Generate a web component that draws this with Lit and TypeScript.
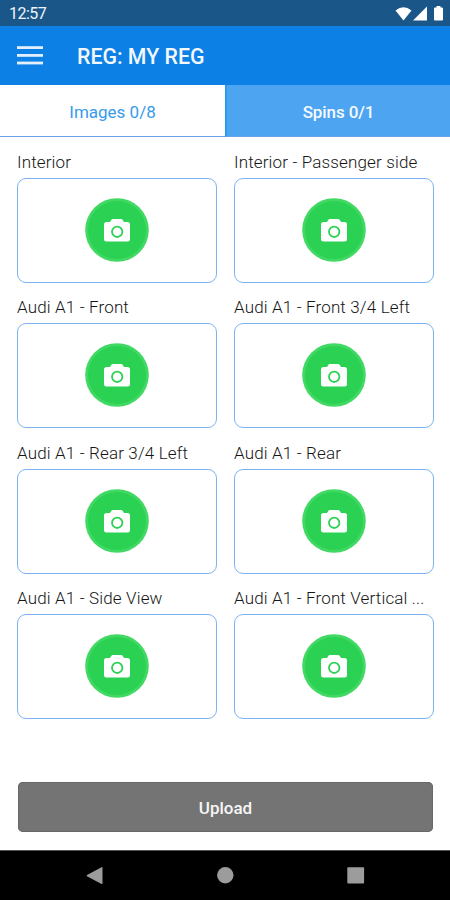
import { LitElement, html, css, svg } from "lit";
import { customElement, property } from "lit/decorators.js";

@customElement("photo-slot")
class PhotoSlot extends LitElement {
  @property() label = "";

  static styles = css`
    :host {
      display: block;
      min-width: 0;
    }
    .label {
      height: 32px;
      line-height: 33px;
      font-size: 17px;
      font-weight: 300;
      letter-spacing: 0.15px;
      color: #161616;
      white-space: nowrap;
    }
    .frame {
      box-sizing: border-box;
      height: 105px;
      border: 1.5px solid #7db3f3;
      border-radius: 9px;
      display: flex;
      align-items: center;
      justify-content: center;
    }
    .shot {
      width: 64px;
      height: 64px;
      margin-bottom: 1px;
      display: block;
    }
  `;

  render() {
    return html`
      <div class="label">${this.label}</div>
      <div class="frame">
        <svg class="shot" viewBox="0 0 64 64">
          <circle cx="32" cy="32" r="31.8" fill="#41d964" />
          <circle cx="32" cy="32" r="29" fill="#2bd152" />
          <path
            fill="#fff"
            d="M21.5 24H25l1.2-2q.6-1 1.8-1h8q1.200 0 1.800 1l1.200 2h3.500q2.500 0 2.500 2.500v14.500q0 2.500-2.500 2.500h-21q-2.500 0-2.500-2.500V26.500Q19 24 21.500 24z"
          />
          <circle cx="32.200" cy="33.800" r="5.200" fill="none" stroke="#2bd152" stroke-width="1.800" />
        </svg>
      </div>
    `;
  }
}

@customElement("app-root")
class AppRoot extends LitElement {
  static styles = css`
    :host {
      display: flex;
      flex-direction: column;
      box-sizing: border-box;
      width: 450px;
      height: 900px;
      overflow: hidden;
      background: #fff;
      font-family: Roboto, sans-serif;
    }
    .status {
      height: 26px;
      flex: none;
      box-sizing: border-box;
      display: flex;
      align-items: center;
      justify-content: space-between;
      padding: 2px 6px 0 9px;
      background: #1a5788;
      color: #edf4fa;
      font-size: 16px;
      letter-spacing: -0.5px;
      line-height: 24px;
    }
    .signals {
      width: 50px;
      height: 18px;
      display: block;
    }
    .bar {
      height: 59px;
      flex: none;
      display: flex;
      align-items: center;
      background: #0c80e4;
      color: #f3f8fe;
    }
    .menu {
      width: 26px;
      height: 21px;
      margin: 0 34px 0 17px;
    }
    .title {
      font-size: 21.3px;
      font-weight: 500;
      padding-top: 1px;
    }
    .tabs {
      height: 52px;
      flex: none;
      display: grid;
      grid-template-columns: 225px 225px;
    }
    .tab {
      box-sizing: border-box;
      border-bottom: 1px solid #6c9fe6;
      display: flex;
      align-items: center;
      justify-content: center;
      font-size: 17px;
      padding-top: 2px;
      color: #379bea;
    }
    .tab.filled {
      background: #4da4f0;
      border-left: 2px solid #2b9beb;
      color: #f4faff;
      font-weight: 500;
      letter-spacing: -0.1px;
    }
    .grid {
      flex: 1;
      display: grid;
      grid-template-columns: 200px 200px;
      grid-auto-rows: 137px;
      gap: 8.4px 17px;
      padding: 9px 16px 0 17px;
    }
    .upload {
      flex: none;
      height: 50px;
      margin: 0 17px 18px 18px;
      border: 0;
      border-radius: 5px;
      box-shadow: inset 0 0 0 1px #686868;
      background: #747474;
      color: #f6f6f6;
      font: 500 17px/51px Roboto, sans-serif;
      text-align: center;
      padding: 1px 0 0;
    }
    .nav {
      flex: none;
      height: 50px;
      background: #000;
    }
    .nav svg {
      display: block;
      width: 450px;
      height: 50px;
    }
  `;

  private slots = [
    "Interior",
    "Interior - Passenger side",
    "Audi A1 - Front",
    "Audi A1 - Front 3/4 Left",
    "Audi A1 - Rear 3/4 Left",
    "Audi A1 - Rear",
    "Audi A1 - Side View",
    "Audi A1 - Front Vertical ...",
  ];

  render() {
    return html`
      <div class="status">
        <span>12:57</span>
        <svg class="signals" viewBox="0 0 50 18" fill="#fff">
          <path d="M1.500 5.500Q9.500-1 17.500 5.500L9.500 15.500z" />
          <path d="M33 1.500V15.500H19z" />
          <path d="M41 2.500h1.500V1h4v1.500H48q1 0 1 1v11q0 1-1 1h-7q-1 0-1-1v-11q0-1 1-1z" />
        </svg>
      </div>
      <header class="bar">
        <svg class="menu" viewBox="0 0 26 21">
          ${[1.2, 9, 16.6].map((y) => svg`<rect x="0" y=${y} width="26" height="2.800" fill="#e4effd" />`)}
        </svg>
        <span class="title">REG: MY REG</span>
      </header>
      <nav class="tabs">
        <div class="tab">Images 0/8</div>
        <div class="tab filled">Spins 0/1</div>
      </nav>
      <main class="grid">${this.slots.map((s) => html`<photo-slot .label=${s}></photo-slot>`)}</main>
      <button class="upload">Upload</button>
      <div class="nav">
        <svg viewBox="0 0 450 50" fill="#9c9c9c">
          <rect width="450" height="1" fill="#555" />
          <path d="M101.500 17.200q1-.5 1 .6v15.500q0 1-1 .6L87 26.200q-.8-.6 0-1.200z" />
          <circle cx="225.300" cy="25.300" r="8.200" />
          <rect x="347.300" y="17.200" width="16.800" height="16.400" rx="1" />
        </svg>
      </div>
    `;
  }
}
